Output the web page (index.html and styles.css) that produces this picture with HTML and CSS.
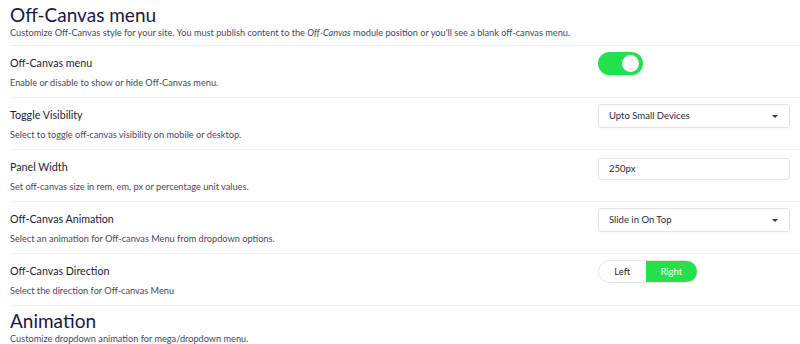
FILE: index.html
```html
<!DOCTYPE html>
<html lang="en">
  <head>
    <meta charset="UTF-8" />
    <title>Off-Canvas settings</title>
    <link rel="stylesheet" href="styles.css">
  </head>
  <body>
    <section class="group">
      <div class="group-head">
        <h2>Off-Canvas menu</h2>
        <p>Customize Off-Canvas style for your site. You must publish content to the <em>Off-Canvas</em> module position or you'll see a blank off-canvas menu.</p>
      </div>

      <div class="field">
        <div class="field-info">
          <h3>Off-Canvas menu</h3>
          <p>Enable or disable to show or hide Off-Canvas menu.</p>
        </div>
        <div class="field-control">
          <label class="switch">
            <input type="checkbox" checked />
            <span class="knob"></span>
          </label>
        </div>
      </div>

      <div class="field">
        <div class="field-info">
          <h3>Toggle Visibility</h3>
          <p>Select to toggle off-canvas visibility on mobile or desktop.</p>
        </div>
        <div class="field-control">
          <div class="select">Upto Small Devices</div>
        </div>
      </div>

      <div class="field">
        <div class="field-info">
          <h3>Panel Width</h3>
          <p>Set off-canvas size in rem, em, px or percentage unit values.</p>
        </div>
        <div class="field-control">
          <input class="text-input" type="text" value="250px" />
        </div>
      </div>

      <div class="field">
        <div class="field-info">
          <h3>Off-Canvas Animation</h3>
          <p>Select an animation for Off-canvas Menu from dropdown options.</p>
        </div>
        <div class="field-control">
          <div class="select">Slide in On Top</div>
        </div>
      </div>

      <div class="field">
        <div class="field-info">
          <h3>Off-Canvas Direction</h3>
          <p>Select the direction for Off-canvas Menu</p>
        </div>
        <div class="field-control">
          <div class="segmented">
            <button>Left</button>
            <button class="active">Right</button>
          </div>
        </div>
      </div>
    </section>

    <section class="group">
      <div class="group-head">
        <h2>Animation</h2>
        <p>Customize dropdown animation for mega/dropdown menu.</p>
      </div>
    </section>
  </body>
</html>
```

FILE: styles.css
```css
* {
  box-sizing: border-box;
  margin: 0;
  padding: 0;
}

body {
  font-family: Lato, "Open Sans", sans-serif;
  color: #1c1c3a;
  background: #fff;
  padding-left: 10px;
  overflow: hidden;
}

.group-head {
  padding-top: 4px;
  padding-bottom: 6px;
  border-bottom: 1px solid #ededf0;
}

.group-head h2 {
  font-size: 19px;
  font-weight: 400;
  line-height: 22px;
  color: #1a1840;
}

.group-head p {
  font-size: 9.2px;
  line-height: 13px;
  color: #4a4760;
}

.field {
  display: flex;
  justify-content: space-between;
  padding: 6px 10px 0 0;
  height: 52px;
  border-bottom: 1px solid #f1f1f3;
}

.field-info {
  padding-top: 4px;
}

.field-info h3 {
  font-size: 10.7px;
  font-weight: 400;
  line-height: 14px;
  color: #1c1c3a;
}

.field-info p {
  margin-top: 6px;
  font-size: 9.2px;
  line-height: 13px;
  color: #4a4760;
}

.field-control {
  width: 192px;
}

.switch {
  display: inline-block;
  width: 45px;
  height: 23px;
  border-radius: 12px;
  background: #22e14c;
  position: relative;
}

.switch input {
  display: none;
}

.switch .knob {
  position: absolute;
  top: 3px;
  right: 4px;
  width: 17px;
  height: 17px;
  border-radius: 50%;
  background: #fff;
}

.select {
  height: 24px;
  border: 1px solid #e3e3e6;
  border-radius: 3px;
  font-size: 9.5px;
  line-height: 22px;
  padding-left: 10px;
  color: #2a2a40;
  position: relative;
  box-shadow: 0 1px 1px rgba(0, 0, 0, 0.03);
}

.select::after {
  content: "";
  position: absolute;
  right: 11px;
  top: 10px;
  border-left: 3px solid transparent;
  border-right: 3px solid transparent;
  border-top: 3px solid #333;
}

.text-input {
  width: 100%;
  height: 22px;
  border: 1px solid #e3e3e6;
  border-radius: 3px;
  font-family: inherit;
  font-size: 9.5px;
  padding-left: 10px;
  color: #2a2a40;
  outline: none;
}

.segmented {
  display: flex;
  width: 100px;
  height: 23px;
  border: 1px solid #e3e3e6;
  border-radius: 12px;
  overflow: hidden;
}

.segmented button {
  flex: 1;
  border: none;
  background: #fff;
  font-family: inherit;
  font-size: 9.5px;
  color: #2a2a40;
}

.segmented button.active {
  flex: 1.1;
  background: #22e14c;
  color: #fff;
}
```
